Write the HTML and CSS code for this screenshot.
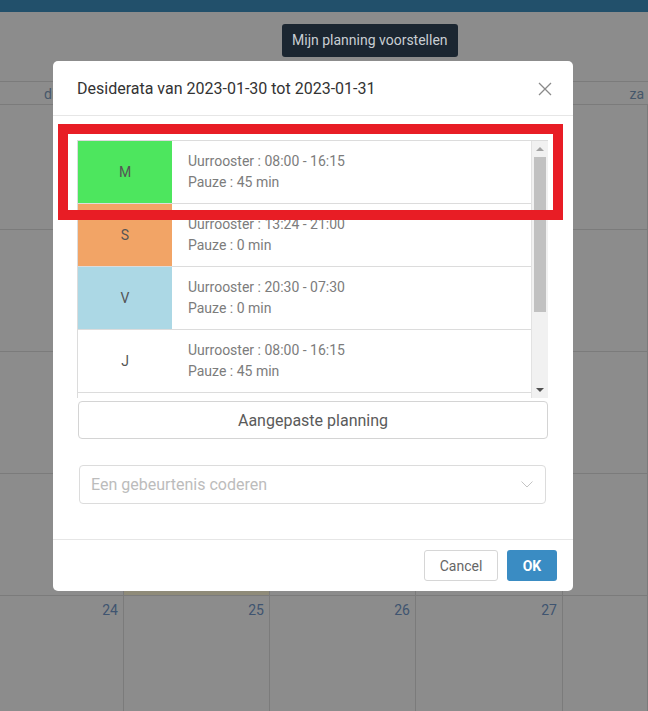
FILE: index.html
```html
<!DOCTYPE html>
<html lang="nl">
<head>
    <meta charset="UTF-8">
    <meta name="viewport" content="width=device-width, initial-scale=1.0">
    <title>Desiderata</title>
    <link rel="stylesheet" href="styles.css">
</head>
<body>
    <div class="topbar"></div>
    <div class="toolbar">
        <span class="propose">Mijn planning voorstellen</span>
    </div>
    <div class="calendar">
        <div class="cal-head">
            <span>di</span>
            <span>za</span>
        </div>
        <div class="cal-row">
            <div class="cell"></div><div class="cell"></div><div class="cell"></div><div class="cell"></div><div class="cell"></div>
        </div>
        <div class="cal-row">
            <div class="cell"></div><div class="cell"></div><div class="cell"></div><div class="cell"></div><div class="cell"></div>
        </div>
        <div class="cal-row">
            <div class="cell"></div><div class="cell"></div><div class="cell"></div><div class="cell"></div><div class="cell"></div>
        </div>
        <div class="cal-row">
            <div class="cell"></div><div class="cell today"></div><div class="cell"></div><div class="cell"></div><div class="cell"></div>
        </div>
        <div class="cal-row open">
            <div class="cell">24</div><div class="cell">25</div><div class="cell">26</div><div class="cell">27</div><div class="cell"></div>
        </div>
    </div>

    <div class="modal">
        <div class="modal-header">
            <h4>Desiderata van 2023-01-30 tot 2023-01-31</h4>
            <span class="close">
                <svg width="14" height="14" viewBox="0 0 14 14"><path d="M1 1 L13 13 M13 1 L1 13" stroke="#8a8a8a" stroke-width="1.3" fill="none"/></svg>
            </span>
        </div>
        <div class="modal-body">
            <div class="shift-list">
                <div class="shift-rows">
                    <div class="shift">
                        <div class="code code-m">M</div>
                        <div class="info">Uurrooster : 08:00 - 16:15<br>Pauze : 45 min</div>
                    </div>
                    <div class="shift">
                        <div class="code code-s">S</div>
                        <div class="info">Uurrooster : 13:24 - 21:00<br>Pauze : 0 min</div>
                    </div>
                    <div class="shift">
                        <div class="code code-v">V</div>
                        <div class="info">Uurrooster : 20:30 - 07:30<br>Pauze : 0 min</div>
                    </div>
                    <div class="shift">
                        <div class="code">J</div>
                        <div class="info">Uurrooster : 08:00 - 16:15<br>Pauze : 45 min</div>
                    </div>
                    <div class="shift">
                        <div class="code"></div>
                        <div class="info"></div>
                    </div>
                </div>
                <div class="scrollbar">
                    <span class="arrow up"></span>
                    <span class="thumb"></span>
                    <span class="arrow down"></span>
                </div>
            </div>
            <button class="custom-btn">Aangepaste planning</button>
            <div class="select">
                <span>Een gebeurtenis coderen</span>
                <svg width="12" height="7" viewBox="0 0 12 7"><path d="M0.5 0.5 L6 6 L11.5 0.5" stroke="#c4c4c4" stroke-width="1" fill="none"/></svg>
            </div>
        </div>
        <div class="modal-footer">
            <button class="btn btn-cancel">Cancel</button>
            <button class="btn btn-ok">OK</button>
        </div>
    </div>

    <div class="annotation"></div>
</body>
</html>
```

FILE: styles.css
```css
* {
    box-sizing: border-box;
}
body {
    margin: 0;
    height: 711px;
    overflow: hidden;
    position: relative;
    font-family: Roboto, "Liberation Sans", sans-serif;
    background-color: #8c8c8c;
}
.topbar {
    height: 12px;
    background-color: #22506b;
}
.toolbar {
    height: 69px;
    padding: 12px 0 0 282px;
}
.propose {
    display: inline-block;
    height: 33px;
    line-height: 33px;
    padding: 0 10px;
    font-size: 14px;
    color: #c9ced3;
    background-color: #1b2631;
    border-radius: 3px;
}
.calendar {
    border-top: 1px solid #7b7b7b;
}
.cal-head {
    display: flex;
    justify-content: space-between;
    height: 23px;
    line-height: 24px;
    padding: 0 4px 0 44px;
    font-size: 14px;
    color: #46576a;
    border-bottom: 1px solid #7b7b7b;
}
.cal-row {
    display: grid;
    grid-template-columns: 124px 146px 146px 147px 1fr;
    height: 122px;
    border-bottom: 1px solid #7b7b7b;
}
.cal-row:nth-child(2) {
    height: 125px;
}
.cal-row.open {
    border-bottom: none;
}
.cell {
    border-right: 1px solid #7b7b7b;
    text-align: right;
    padding: 6px 5px 0 0;
    font-size: 14px;
    color: #3f5470;
}
.cell.today {
    background-color: #8f8b79;
}
.modal {
    position: absolute;
    left: 53px;
    top: 61px;
    width: 520px;
    height: 530px;
    background-color: white;
    border-radius: 5px;
    display: flex;
    flex-direction: column;
}
.modal-header {
    height: 55px;
    display: flex;
    align-items: center;
    justify-content: space-between;
    padding: 0 21px 0 24px;
    border-bottom: 1px solid #e6e6e6;
}
.modal-header h4 {
    margin: 0;
    font-size: 16px;
    font-weight: normal;
    color: #333;
    padding-top: 1px;
}
.close {
    display: flex;
    padding-top: 2px;
}
.modal-body {
    padding: 24px 25px 0 24px;
    height: 424px;
    border-bottom: 1px solid #e6e6e6;
}
.shift-list {
    display: flex;
    height: 258px;
    border: 1px solid #dcdcdc;
    border-bottom: none;
    border-right: none;
}
.shift-rows {
    flex: 1;
    overflow: hidden;
    border-right: 1px solid #e2e2e2;
}
.shift {
    display: flex;
    height: 63px;
    border-bottom: 1px solid #dcdcdc;
}
.code {
    width: 94px;
    display: flex;
    align-items: center;
    justify-content: center;
    font-size: 14px;
    color: #555;
}
.code-m {
    background-color: #4de65e;
}
.code-s {
    background-color: #f2a466;
}
.code-v {
    background-color: #acd8e5;
}
.info {
    padding-left: 16px;
    display: flex;
    flex-direction: column;
    justify-content: center;
    font-size: 14px;
    line-height: 21px;
    color: #7c7c7c;
}
.scrollbar {
    width: 16px;
    background-color: #f1f1f1;
    position: relative;
}
.thumb {
    position: absolute;
    left: 2px;
    top: 16px;
    width: 12px;
    height: 155px;
    background-color: #c1c1c1;
}
.arrow {
    position: absolute;
    left: 4px;
    width: 0;
    height: 0;
    border-left: 4px solid transparent;
    border-right: 4px solid transparent;
}
.arrow.up {
    top: 6px;
    border-bottom: 4px solid #a3a3a3;
}
.arrow.down {
    top: 247px;
    border-top: 4px solid #505050;
}
.custom-btn {
    display: block;
    width: 470px;
    height: 38px;
    margin: 3px 0 0 1px;
    font-family: inherit;
    font-size: 16px;
    color: #5a5a5a;
    background-color: white;
    border: 1px solid #d4d4d4;
    border-radius: 4px;
}
.select {
    display: flex;
    align-items: center;
    justify-content: space-between;
    height: 39px;
    margin: 26px 2px 0 2px;
    padding: 0 12px 0 11px;
    font-size: 16px;
    color: #bcbcbc;
    border: 1px solid #dcdcdc;
    border-radius: 4px;
}
.modal-footer {
    flex: 1;
    display: flex;
    justify-content: flex-end;
    align-items: flex-start;
    gap: 9px;
    padding: 10px 16px 0 0;
}
.btn {
    height: 31px;
    font-family: inherit;
    font-size: 14px;
    border-radius: 3px;
}
.btn-cancel {
    width: 74px;
    color: #666;
    background-color: white;
    border: 1px solid #d6d6d6;
}
.btn-ok {
    width: 50px;
    font-weight: bold;
    color: white;
    background-color: #3a8cc3;
    border: none;
}
.annotation {
    position: absolute;
    left: 58px;
    top: 124px;
    width: 505px;
    height: 96px;
    border: 10px solid #e81d25;
}
```
